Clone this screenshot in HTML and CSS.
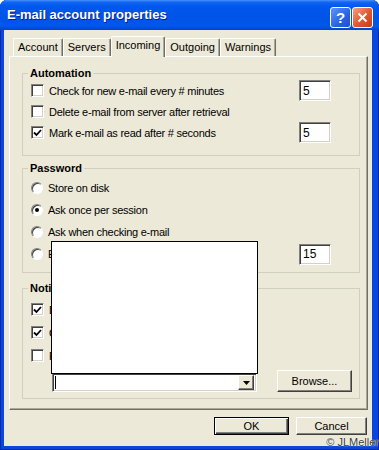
FILE: index.html
```html
<!DOCTYPE html>
<html lang="en">
  <head>
    <meta charset="UTF-8" />
    <meta name="viewport" content="width=device-width, initial-scale=1.0" />
    <title>E-mail account properties</title>
    <link rel="stylesheet" href="styles.css">
  </head>
  <body>
    <div class="window">
      <div class="titleBar">
        <span class="title">E-mail account properties</span>
        <div class="titleBtns">
          <span class="helpBtn">?</span>
          <span class="closeBtn">
            <svg width="11" height="11" viewBox="0 0 11 11">
              <path d="M1.5 1.5 L9.5 9.5 M9.5 1.5 L1.5 9.5" stroke="#fff" stroke-width="2" />
            </svg>
          </span>
        </div>
      </div>
      <div class="client">
        <div class="tabs">
          <span class="tab">Account</span>
          <span class="tab">Servers</span>
          <span class="tab active">Incoming</span>
          <span class="tab">Outgoing</span>
          <span class="tab">Warnings</span>
        </div>
        <div class="panel">
          <fieldset class="group automation">
            <legend>Automation</legend>
            <div class="row">
              <span class="check"></span>
              <span class="label">Check for new e-mail every # minutes</span>
              <input class="field" type="text" value="5" />
            </div>
            <div class="row">
              <span class="check"></span>
              <span class="label">Delete e-mail from server after retrieval</span>
            </div>
            <div class="row">
              <span class="check">
                <svg width="9" height="8" viewBox="0 0 9 8">
                  <polyline points="1,3.5 3.5,6 8,1" fill="none" stroke="#000" stroke-width="1.8" />
                </svg>
              </span>
              <span class="label">Mark e-mail as read after # seconds</span>
              <input class="field" type="text" value="5" />
            </div>
          </fieldset>

          <fieldset class="group password">
            <legend>Password</legend>
            <div class="row">
              <span class="radio"></span>
              <span class="label">Store on disk</span>
            </div>
            <div class="row">
              <span class="radio on"></span>
              <span class="label">Ask once per session</span>
            </div>
            <div class="row">
              <span class="radio"></span>
              <span class="label">Ask when checking e-mail</span>
            </div>
            <div class="row">
              <span class="radio"></span>
              <span class="label">Expire password after # minutes</span>
              <input class="field" type="text" value="15" />
            </div>
          </fieldset>

          <fieldset class="group notify">
            <legend>Notification</legend>
            <div class="row">
              <span class="check">
                <svg width="9" height="8" viewBox="0 0 9 8">
                  <polyline points="1,3.5 3.5,6 8,1" fill="none" stroke="#000" stroke-width="1.8" />
                </svg>
              </span>
              <span class="label">Display a notification message</span>
            </div>
            <div class="row">
              <span class="check">
                <svg width="9" height="8" viewBox="0 0 9 8">
                  <polyline points="1,3.5 3.5,6 8,1" fill="none" stroke="#000" stroke-width="1.8" />
                </svg>
              </span>
              <span class="label">Open the mail window</span>
            </div>
            <div class="row">
              <span class="check"></span>
              <span class="label">Play a sound</span>
            </div>
            <div class="fileRow">
              <div class="combo">
                <div class="dropList"></div>
                <span class="caret"></span>
                <span class="comboBtn">
                  <svg width="7" height="4" viewBox="0 0 7 4"><path d="M0 0 H7 L3.5 4 Z" fill="#000" /></svg>
                </span>
              </div>
              <button class="btn browseBtn">Browse...</button>
            </div>
          </fieldset>
        </div>
        <div class="actions">
          <button class="btn okBtn">OK</button>
          <button class="btn cancelBtn">Cancel</button>
        </div>
      </div>
      <span class="watermark">© JLMeller</span>
    </div>
  </body>
</html>
```

FILE: styles.css
```css
body {
  margin: 0;
  background-color: #ffffff;
  font-family: "Liberation Sans", Arial, sans-serif;
  font-size: 11px;
  color: #000000;
  overflow: hidden;
}
.window {
  position: relative;
  width: 379px;
  height: 450px;
  box-sizing: border-box;
  display: flex;
  flex-direction: column;
  background-color: #0a46dc;
  border-radius: 7px 7px 0 0;
  box-shadow: inset 1px 0 #0a2aa8, inset -1px 0 #0a2aa8, inset 0 -1px #0a2aa8;
}
.titleBar {
  height: 30px;
  flex-shrink: 0;
  display: flex;
  justify-content: space-between;
  padding: 0 6px 0 7px;
  border-radius: 7px 7px 0 0;
  background: linear-gradient(
    to bottom,
    #4a94ff 0px,
    #1468f2 2px,
    #0058ee 6px,
    #0053e6 18px,
    #0058ec 26px,
    #0044cc 30px
  );
}
.title {
  line-height: 30px;
  color: white;
  font-weight: bold;
  font-size: 13px;
  text-shadow: 1px 1px #0a1e8c;
}
.titleBtns {
  display: flex;
  gap: 1px;
  padding-top: 7px;
}
.helpBtn,
.closeBtn {
  width: 21px;
  height: 21px;
  box-sizing: border-box;
  border: 1px solid white;
  border-radius: 3px;
  display: flex;
  align-items: center;
  justify-content: center;
  color: white;
}
.helpBtn {
  background: linear-gradient(135deg, #5a95ff, #2a62e4 60%, #1d4fd0);
  font-weight: bold;
  font-size: 15px;
}
.closeBtn {
  background: linear-gradient(135deg, #f4a080, #e0562f 55%, #c83a18);
}
.client {
  flex: 1;
  margin: 0 7px 4px 4px;
  background-color: #ece9d8;
  display: flex;
  flex-direction: column;
}
.tabs {
  display: flex;
  align-items: flex-end;
  height: 26px;
  box-sizing: border-box;
  padding-left: 9px;
}
.tab {
  height: 18px;
  box-sizing: border-box;
  padding: 0 4px;
  line-height: 17px;
  border: 1px solid;
  border-color: #ffffff #716f64 transparent #ffffff;
  border-bottom: none;
  border-radius: 2px 2px 0 0;
  box-shadow: inset -1px 0 #aca899;
}
.tab.active {
  position: relative;
  z-index: 1;
  height: 21px;
  margin-bottom: -1px;
  background-color: #ece9d8;
}
.panel {
  height: 354px;
  width: 359px;
  margin-left: 5px;
  box-sizing: border-box;
  border: 1px solid;
  border-color: #ffffff #716f64 #716f64 #ffffff;
  box-shadow: inset -1px -1px #aca899;
  padding: 0 7px 0 12px;
}
.group {
  margin: 0;
  padding: 0 7px 0 8px;
  border: 1px solid #d0d0bf;
}
.group legend {
  padding: 0 2px;
  margin-left: -3px;
  font-weight: bold;
  line-height: 13px;
}
.automation {
  margin-top: 10px;
  padding-bottom: 12px;
}
.password {
  margin-top: 6px;
  padding-top: 2px;
  padding-bottom: 7px;
}
.notify {
  margin-top: 9px;
  padding-top: 3px;
  padding-bottom: 6px;
}
.row {
  display: flex;
  align-items: center;
  height: 21px;
}
.password .row {
  height: 22px;
}
.notify .row {
  height: 23px;
}
.label {
  flex: 1;
  letter-spacing: -0.25px;
  white-space: nowrap;
}
.check {
  width: 13px;
  height: 13px;
  box-sizing: border-box;
  flex-shrink: 0;
  margin-right: 5px;
  border: 1px solid;
  border-color: #808080 #ffffff #ffffff #808080;
  box-shadow: inset 1px 1px #404040, inset -1px -1px #d4d0c8;
  background-color: white;
  display: flex;
  align-items: center;
  justify-content: center;
}
.radio {
  width: 12px;
  height: 12px;
  box-sizing: border-box;
  flex-shrink: 0;
  margin-right: 5px;
  border-radius: 50%;
  border: 1px solid;
  border-color: #808080 #ffffff #ffffff #808080;
  box-shadow: inset 1px 1px #404040;
  background-color: white;
  display: flex;
  align-items: center;
  justify-content: center;
}
.radio.on::after {
  content: "";
  width: 4px;
  height: 4px;
  border-radius: 50%;
  background-color: black;
}
.field {
  width: 32px;
  height: 21px;
  box-sizing: border-box;
  margin: 0 21px 0 0;
  padding: 0 3px;
  border: 1px solid;
  border-color: #808080 #ffffff #ffffff #808080;
  box-shadow: inset 1px 1px #404040, inset -1px -1px #d4d0c8;
  background-color: white;
  font-family: inherit;
  font-size: 12px;
  color: black;
  outline: none;
}
.fileRow {
  display: flex;
  align-items: flex-end;
  justify-content: space-between;
  height: 22px;
  margin-top: 3px;
}
.combo {
  position: relative;
  width: 205px;
  height: 19px;
  box-sizing: border-box;
  margin-left: 21px;
  padding: 2px;
  border: 1px solid;
  border-color: #808080 #ffffff #ffffff #808080;
  box-shadow: inset 1px 1px #404040, inset -1px -1px #d4d0c8;
  background-color: white;
  display: flex;
  align-items: center;
  justify-content: space-between;
}
.caret {
  width: 1px;
  height: 13px;
  background-color: black;
}
.comboBtn {
  width: 16px;
  height: 15px;
  box-sizing: border-box;
  border: 1px solid;
  border-color: #ffffff #404040 #404040 #ffffff;
  box-shadow: inset -1px -1px #808080;
  background-color: #ece9d8;
  display: flex;
  align-items: center;
  justify-content: center;
}
.dropList {
  position: absolute;
  z-index: 5;
  left: -2px;
  bottom: 100%;
  width: 207px;
  height: 133px;
  box-sizing: border-box;
  border: 1px solid black;
  background-color: white;
}
.btn {
  width: 75px;
  height: 18px;
  box-sizing: border-box;
  padding: 0;
  font-family: inherit;
  font-size: 11px;
  color: black;
  background-color: #ece9d8;
  border: 1px solid;
  border-color: #ffffff #404040 #404040 #ffffff;
  box-shadow: inset -1px -1px #808080;
}
.browseBtn {
  height: 22px;
}
.okBtn {
  border-color: black;
  box-shadow: inset 1px 1px #ffffff, inset -1px -1px #404040, inset -2px -2px #808080;
}
.cancelBtn {
  width: 71px;
}
.actions {
  display: flex;
  justify-content: flex-end;
  gap: 7px;
  margin-top: 7px;
  padding-right: 5px;
}
.watermark {
  position: absolute;
  right: 0;
  bottom: 2px;
  font-size: 11px;
  line-height: 12px;
  color: #3a3a3a;
  text-shadow: 0 0 1px #ffffff, 0 0 1px #ffffff;
}
```
